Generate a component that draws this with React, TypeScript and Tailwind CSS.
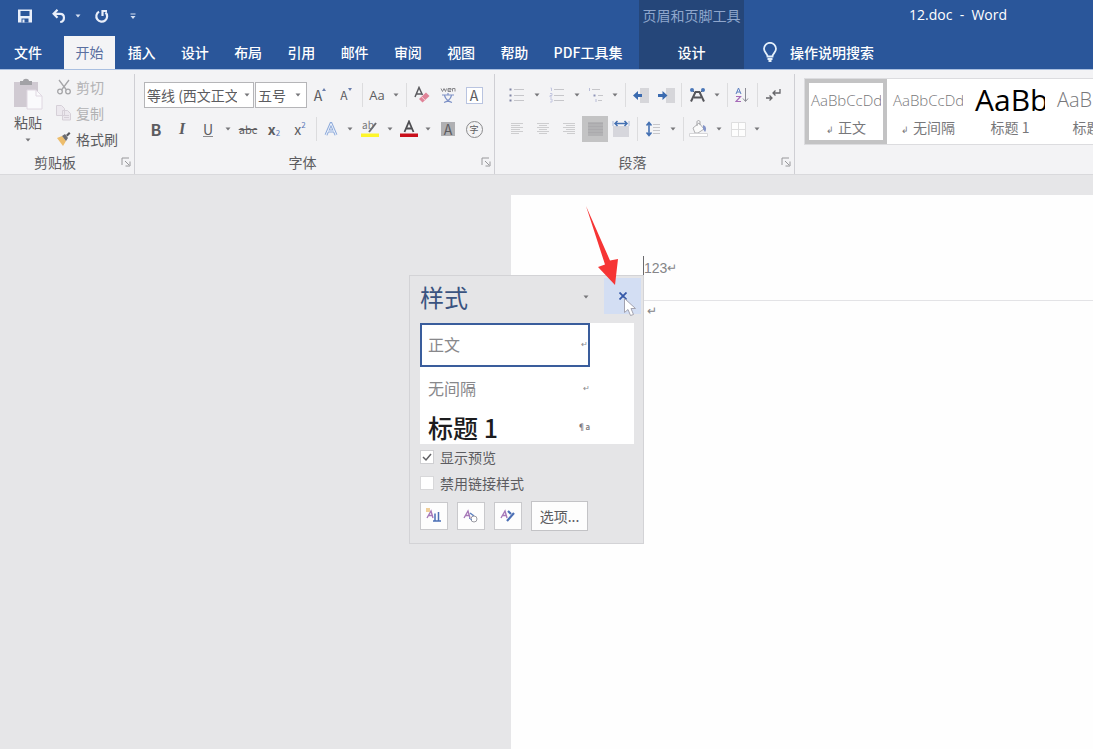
import type { ReactNode } from "react";
import clsx from "clsx";

const tabs = ["插入", "设计", "布局", "引用", "邮件", "审阅", "视图", "帮助"];

const gallery = [
  { name: "正文", mark: true, sample: "AaBbCcDd" },
  { name: "无间隔", mark: true, sample: "AaBbCcDd" },
  { name: "标题 1", sample: "AaBb", big: true },
  { name: "标题 2", sample: "AaBbC", medium: true },
];

function Triangle({ color = "#77777a", className }: { color?: string; className?: string }) {
  return (
    <svg width="6" height="4" viewBox="0 0 6 4" className={className}>
      <path d="M0.5 0.5h5L3 3.5z" fill={color} />
    </svg>
  );
}

function Caret({ className = "w-[14px]" }: { className?: string }) {
  return (
    <button aria-label="更多" className={clsx("flex h-[26px] shrink-0 items-center justify-center", className)}>
      <Triangle />
    </button>
  );
}

function Sep() {
  return (
    <div className="flex w-[6px] shrink-0 justify-center">
      <div className="h-6 w-px bg-[#dcdcde]" />
    </div>
  );
}

type ToolProps = { label: string; narrow?: boolean; active?: boolean; children: ReactNode };

function Tool({ label, narrow, active, children }: ToolProps) {
  return (
    <button
      title={label}
      aria-label={label}
      className={clsx(
        "flex h-[26px] shrink-0 items-center justify-center leading-none",
        narrow ? "w-6" : "w-[26px]",
        active && "bg-[#c3c3c4]",
      )}
    >
      {children}
    </button>
  );
}

function Launcher() {
  return (
    <button aria-label="对话框启动器" className="flex size-4 items-center justify-center">
      <svg width="10" height="10" viewBox="0 0 10 10" fill="none" stroke="#98989b">
        <path d="M1 8V1h7M4 4l4 4M9 4.5V9H4.5" />
      </svg>
    </button>
  );
}

function Group({ title, className, children }: { title: string; className: string; children: ReactNode }) {
  return (
    <section className={clsx("flex shrink-0 flex-col border-r border-[#cfcfd4]", className)}>
      <div className="h-20">{children}</div>
      <div className="flex h-5 items-center pb-1">
        <h2 className="min-w-0 flex-1 pr-2 text-center text-sm leading-5">{title}</h2>
        <Launcher />
      </div>
    </section>
  );
}

// horizontal rules used by the list and alignment icons: [x, y, width]
function Lines({ rows, color = "#c6c6ca" }: { rows: number[][]; color?: string }) {
  return (
    <>
      {rows.map(([x, y, w]) => (
        <path key={y} d={`M${x} ${y}h${w}`} stroke={color} />
      ))}
    </>
  );
}

function Header() {
  return (
    <header className="flex h-[70px] border-b border-[#a9bfe0] bg-[#2a569a] text-sm text-white">
      <div className="flex w-[639px] shrink-0 flex-col">
        <div className="flex h-9 items-center pb-1 pl-3">
          <button aria-label="保存" className="flex w-[26px] justify-center">
            <svg width="14" height="14" viewBox="0 0 14 14">
              <path d="M0 0.500h14v13H0z" fill="#e9effa" />
              <path d="M2.500 2h9v5h-9zM3.500 9.500h7v4h-7z" fill="#2a569a" />
              <path d="M4.500 10.500h2v3h-2z" fill="#e9effa" />
            </svg>
          </button>
          <button aria-label="撤消" className="ml-2 flex w-[26px] justify-center">
            <svg width="14" height="14" viewBox="0 0 14 14" fill="none" stroke="#e9effa" strokeWidth="2.2">
              <path d="M5.5 0.8L1.6 4.8l3.9 4M2 4.8h6.2c5 0 5 7.500 0 8.200" />
            </svg>
          </button>
          <span className="flex w-3 justify-center">
            <Triangle color="#d5e0f2" />
          </span>
          <button aria-label="重复" className="ml-1 flex w-[26px] justify-center">
            <svg width="15" height="15" viewBox="0 0 15 15" fill="none" stroke="#e9effa" strokeWidth="2.2">
              <path d="M5 2.600a5.400 5.400 0 1 0 6.500 .8" />
              <path d="M8.500 7V2H13" />
            </svg>
          </button>
          <button aria-label="自定义快速访问工具栏" className="ml-2 flex w-[22px] justify-center">
            <svg width="6" height="7" viewBox="0 0 6 7">
              <path d="M0.5 0.5h5v1h-5zM0.5 3h5L3 6z" fill="#d5e0f2" />
            </svg>
          </button>
        </div>
        <nav className="flex flex-1 font-medium">
          <button className="w-14 pb-[2px]">文件</button>
          <button className="ml-2 w-[51px] bg-[#f4f4f6] pb-[2px] font-normal text-[#5a6fa0]">开始</button>
          {tabs.map((tab) => (
            <button key={tab} className="flex-1 pb-[2px]">
              {tab}
            </button>
          ))}
          <button className="w-[98px] pr-1 pb-[2px]">PDF工具集</button>
        </nav>
      </div>
      <div className="flex w-[105px] shrink-0 flex-col bg-[#254679]">
        <div className="h-9 text-center leading-[30px] whitespace-nowrap text-[#8fa6cc]">页眉和页脚工具</div>
        <button className="flex-1 pb-[2px] font-medium">设计</button>
      </div>
      <div className="flex min-w-0 flex-1 flex-col">
        <h1 className="h-9 pl-[165px] font-['Open_Sans','Noto_Sans_CJK_SC',sans-serif] text-sm leading-[30px] font-medium whitespace-pre">
          {"12.doc  -  Word"}
        </h1>
        <button className="flex flex-1 items-center gap-3 pb-[2px] pl-[18px] font-medium">
          <svg width="16" height="20" viewBox="0 0 16 20" fill="none" stroke="#e4f0fb" strokeWidth="1.8">
            <path d="M5.5 14.500c0-3-3.500-4-3.500-7.700a6 6 0 0 1 12 0c0 3.700-3.500 4.700-3.500 7.700z" />
            <path d="M5.500 17h5M6.500 19h3" />
          </svg>
          操作说明搜索
        </button>
      </div>
    </header>
  );
}

function Clipboard() {
  return (
    <Group title="剪贴板" className="w-[135px]">
      <div className="flex h-full">
        <button className="flex w-14 flex-col items-center pt-1 text-sm leading-5">
          <svg width="32" height="32" viewBox="0 0 32 32">
            <path d="M2 4h24v25H2z" fill="#d0cad2" />
            <path d="M8 3h3c0-3 6-3 6 0h3v4H8z" fill="#a2a2a6" />
            <path d="M15 12h9l6 6v13H15z" fill="#fafafc" stroke="#e0d8e2" />
            <path d="M24 12v6h6" fill="none" stroke="#e0d8e2" />
          </svg>
          <span className="mt-[2px]">粘贴</span>
          <Triangle className="mt-[6px]" />
        </button>
        <div className="flex flex-col text-sm">
          <button className="flex h-[26px] items-center gap-1 text-[#b2b2b4]">
            <svg width="16" height="16" viewBox="0 0 16 16" fill="none" stroke="#a5a5a8" strokeWidth="1.3">
              <path d="M3 1l7.500 10M13 1L5.500 11" />
              <circle cx="4" cy="12.5" r="2.3" />
              <circle cx="12" cy="12.5" r="2.3" />
            </svg>
            剪切
          </button>
          <button className="flex h-[26px] items-center gap-1 text-[#b2b2b4]">
            <svg width="16" height="16" viewBox="0 0 16 16" fill="#ece8ee" stroke="#d6d0d8">
              <path d="M0.500 0.500h5l3 3v7h-8zM6.500 5.500h5l3 3v6.500h-8z" />
              <path d="M8 10.500h5M8 12.500h5" />
            </svg>
            复制
          </button>
          <button className="flex h-[26px] items-center gap-1">
            <svg width="16" height="16" viewBox="0 0 16 16">
              <path d="M1 7l5-2 4 5-3 5z" fill="#edbd6c" />
              <path d="M6 5l3-2 3 4-2 3z" fill="#6b6b70" />
              <path d="M10 4l3-3 1.500 1.500-3 3z" fill="#57575c" />
            </svg>
            格式刷
          </button>
        </div>
      </div>
    </Group>
  );
}

function FontGroup() {
  return (
    <Group title="字体" className="w-[360px]">
      <div className="flex h-[42px] items-center pl-[9px]">
        <div className="relative">
          <select
            aria-label="字体"
            className="block h-[26px] w-[110px] appearance-none border border-[#b5b5b8] bg-white pr-4 pl-[2px] text-sm"
          >
            <option>等线 (西文正文)</option>
          </select>
          <Triangle className="pointer-events-none absolute top-[11px] right-1" />
        </div>
        <div className="relative ml-px">
          <select
            aria-label="字号"
            className="block h-[26px] w-[52px] appearance-none border border-[#b5b5b8] bg-white pl-[2px] text-sm"
          >
            <option>五号</option>
          </select>
          <Triangle className="pointer-events-none absolute top-[11px] right-[6px]" />
        </div>
        <Tool label="增大字号">
          <span className="text-sm leading-none">A</span>
          <svg width="4" height="3" viewBox="0 0 4 3" className="mb-3">
            <path d="M0 3l2-3 2 3z" fill="#6b7fae" />
          </svg>
        </Tool>
        <Tool label="减小字号">
          <span className="text-xs leading-none">A</span>
          <svg width="4" height="3" viewBox="0 0 4 3" className="mb-3">
            <path d="M0 0l2 3 2-3z" fill="#6b7fae" />
          </svg>
        </Tool>
        <Sep />
        <Tool label="更改大小写" narrow>
          <span className="font-['Open_Sans',sans-serif] text-[13px]">Aa</span>
        </Tool>
        <Caret />
        <Sep />
        <Tool label="清除所有格式">
          <svg width="16" height="18" viewBox="0 0 16 18">
            <path d="M1 11L5 1.500 8.500 9M2.500 8h5" fill="none" stroke="#5a5a5e" strokeWidth="1.5" />
            <path d="M5 13l7-6.500 3.500 3.500-7 6.500z" fill="#e08398" />
            <path d="M7.500 10.700l3.500 3.500" stroke="#f6d5dc" />
          </svg>
        </Tool>
        <Tool label="拼音指南">
          <svg width="16" height="18" viewBox="0 0 16 18" fill="none">
            <path d="M1 2.500l1.500 3 1.500-3 1.500 3 1-3M8 4h3V2.500H8v3h3M12.500 5.500v-3h2.500v3" stroke="#8a8a8e" />
            <path d="M2 9h12M8 7v2M4.500 9.500c1 3.500 4 6 7.500 7M11.500 9.500c-1 3.500-4 6-7.500 7" stroke="#7c90c6" strokeWidth="1.2" />
          </svg>
        </Tool>
        <Tool label="字符边框">
          <span className="flex size-[17px] items-center justify-center border border-[#b9c4e0] bg-white text-sm leading-none">A</span>
        </Tool>
      </div>
      <div className="flex h-[26px] items-center pl-2">
        <Tool label="加粗">
          <b className="text-base leading-none">B</b>
        </Tool>
        <Tool label="倾斜">
          <i className="font-['Liberation_Serif',serif] text-base leading-none font-bold">I</i>
        </Tool>
        <Tool label="下划线">
          <span className="border-b border-[#8a8a8c] text-sm leading-none">U</span>
        </Tool>
        <Caret />
        <Tool label="删除线">
          <s className="text-[11px]">abc</s>
        </Tool>
        <Tool label="下标">
          <b className="text-sm leading-none">x</b>
          <span className="mt-2 text-[8px] text-[#5c78b8]">2</span>
        </Tool>
        <Tool label="上标">
          <span className="text-sm leading-none">x</span>
          <span className="mb-2 text-[8px] text-[#5c78b8]">2</span>
        </Tool>
        <Sep />
        <Tool label="文本效果" narrow>
          <svg width="14" height="14" viewBox="0 0 14 14" fill="none">
            <path d="M2 13L7 1.500 12 13M4 9h6" stroke="#8fabdb" strokeWidth="3" />
            <path d="M2 13L7 1.500 12 13M4 9h6" stroke="#f0f5fd" />
          </svg>
        </Tool>
        <Caret />
        <Tool label="突出显示颜色">
          <svg width="18" height="18" viewBox="0 0 18 18">
            <text x="1" y="9" fontSize="10" fill="#77777a">
              ab
            </text>
            <path d="M8 12l7-9" stroke="#6a6a70" strokeWidth="2" />
            <path d="M0 13.500h18v3.500H0z" fill="#fdf52a" />
          </svg>
        </Tool>
        <Caret />
        <Tool label="字体颜色" narrow>
          <svg width="18" height="18" viewBox="0 0 18 18">
            <path d="M4.500 12L9 1.500 13.500 12M6 8.500h6" fill="none" stroke="#4e4e52" strokeWidth="1.8" />
            <path d="M0 13.500h18v3.500H0z" fill="#c9101c" />
          </svg>
        </Tool>
        <Caret />
        <Tool label="字符底纹">
          <span className="flex size-[14px] items-center justify-center bg-[#b0b0b3] text-sm leading-none">A</span>
        </Tool>
        <Tool label="带圈字符">
          <span className="flex size-[17px] items-center justify-center rounded-full border border-[#8a8a8c] text-[9px]">字</span>
        </Tool>
      </div>
    </Group>
  );
}

function Paragraph() {
  return (
    <Group title="段落" className="w-[300px]">
      <div className="flex h-[42px] items-center pl-[9px]">
        <Tool label="项目符号">
          <svg width="16" height="16" viewBox="0 0 16 16">
            <Lines rows={[[5, 2.5, 10], [5, 8.5, 10], [5, 13.5, 10]]} />
            <path d="M0.500 1.500h2v2h-2zM0.500 7.500h2v2h-2zM0.500 12.500h2v2h-2z" fill="#8085a5" />
          </svg>
        </Tool>
        <Caret />
        <Tool label="编号">
          <svg width="16" height="16" viewBox="0 0 16 16">
            <Lines rows={[[5, 2.5, 10], [5, 8.5, 10], [5, 13.5, 10]]} />
            <path d="M1.500 1h1v3M1 6.500h2v2H1v1.500h2M1 12h2v3H1" fill="none" stroke="#c3c6e0" />
          </svg>
        </Tool>
        <Caret />
        <Tool label="多级列表" narrow>
          <svg width="16" height="16" viewBox="0 0 16 16">
            <Lines rows={[[4, 2.5, 8], [10, 8.5, 5], [10, 13.5, 4]]} />
            <path d="M1.500 1v3M8 12v3" stroke="#b9bdd8" />
            <path d="M5.500 7.500h2v2h-2z" fill="#8f94b8" />
          </svg>
        </Tool>
        <Caret />
        <Sep />
        <Tool label="减少缩进量">
          <svg width="17" height="15" viewBox="0 0 17 15">
            <path d="M7 0h9v15H7z" fill="#d6d6da" />
            <path d="M0 7.500L5 3v3h4v3H5v3z" fill="#3b6bb0" />
          </svg>
        </Tool>
        <Tool label="增加缩进量" narrow>
          <svg width="17" height="15" viewBox="0 0 17 15">
            <path d="M8 0h9v15H8z" fill="#d6d6da" />
            <path d="M9.500 7.500L4.500 3v3H0v3h4.500v3z" fill="#3b6bb0" />
          </svg>
        </Tool>
        <Sep />
        <Tool label="中文版式">
          <svg width="17" height="16" viewBox="0 0 17 16">
            <path d="M2 14.500L6.500 5h4L15 14.500M5 10.500h7" fill="none" stroke="#55555a" strokeWidth="2" />
            <path d="M3 3l3 3M14 3l-3 3" stroke="#55555a" />
            <circle cx="3" cy="3" r="2" fill="#4a76b8" />
            <circle cx="14" cy="3" r="2" fill="#4a76b8" />
          </svg>
        </Tool>
        <Caret />
        <Sep />
        <Tool label="排序" narrow>
          <svg width="14" height="16" viewBox="0 0 14 16" fill="none">
            <path d="M1 7l2.500-6L6 7M2 5h3" stroke="#5b7fc0" />
            <path d="M1 9.500h4.500L1 14.500h5" stroke="#a66bb8" strokeWidth="1.2" />
            <path d="M10.500 1v13M8 11.500l2.500 3 2.500-3" stroke="#8c8c96" />
          </svg>
        </Tool>
        <Sep />
        <Tool label="显示编辑标记">
          <svg width="16" height="16" viewBox="0 0 16 16" fill="none" stroke="#66666a" strokeWidth="1.3">
            <path d="M15 2v4H8M10.500 3.500L8 6l2.500 2.500M1 11h6M4.500 8.500L7 11l-2.500 2.500" />
          </svg>
        </Tool>
      </div>
      <div className="flex h-[26px] items-center pl-[9px]">
        <Tool label="左对齐">
          <svg width="14" height="14" viewBox="0 0 14 14">
            <Lines rows={[[1, 1.5, 12], [1, 3.5, 9], [1, 5.5, 12], [1, 7.5, 9], [1, 9.5, 12], [1, 11.5, 8]]} color="#cdcdcf" />
          </svg>
        </Tool>
        <Tool label="居中">
          <svg width="14" height="14" viewBox="0 0 14 14">
            <Lines rows={[[1, 1.5, 12], [3, 3.5, 8], [1, 5.5, 12], [3, 7.5, 8], [1, 9.5, 12], [3, 11.5, 8]]} color="#cdcdcf" />
          </svg>
        </Tool>
        <Tool label="右对齐">
          <svg width="14" height="14" viewBox="0 0 14 14">
            <Lines rows={[[1, 1.5, 12], [4, 3.5, 9], [1, 5.5, 12], [4, 7.5, 9], [1, 9.5, 12], [5, 11.5, 8]]} color="#cdcdcf" />
          </svg>
        </Tool>
        <Tool label="两端对齐" active>
          <svg width="15" height="14" viewBox="0 0 15 14">
            <path d="M0 0h15v14H0z" fill="#b2b2b4" />
            <Lines rows={[[0, 1.5, 15], [0, 4.5, 15], [0, 7.5, 15], [0, 10.5, 15]]} color="#abaaad" />
          </svg>
        </Tool>
        <Tool label="分散对齐">
          <svg width="18" height="18" viewBox="0 0 18 18">
            <path d="M1 6h16v11H1z" fill="#d6d6dc" />
            <path d="M1 1v5M17 1v5" stroke="#a9b8d8" />
            <path d="M3 3.500h12M5.500 1L3 3.500 5.500 6M12.500 1L15 3.500 12.500 6" fill="none" stroke="#4470b2" strokeWidth="1.5" />
          </svg>
        </Tool>
        <Sep />
        <Tool label="行距">
          <svg width="16" height="16" viewBox="0 0 16 16">
            <path d="M4 2v12M1.500 4.500L4 1.500l2.500 3M1.500 11.500L4 14.500l2.500-3" fill="none" stroke="#4470b2" strokeWidth="1.6" />
            <Lines rows={[[8, 3.5, 7], [8, 6.5, 7], [8, 9.5, 7], [8, 12.5, 7]]} />
          </svg>
        </Tool>
        <Caret />
        <Sep />
        <Tool label="底纹">
          <svg width="20" height="18" viewBox="0 0 20 18">
            <path d="M4 8l6-5 5 6-6 4H6z" fill="#fafafa" stroke="#b0b0b3" />
            <path d="M8 6V2c0-2 3-2 3 0v3" fill="none" stroke="#a5a5a8" />
            <path d="M14 5c3 1 4 4 2 7l-2-3z" fill="#8494c8" />
            <path d="M0.500 13.500h18v3h-18z" fill="#fff" stroke="#d6d6d9" />
          </svg>
        </Tool>
        <Caret />
        <Tool label="边框" narrow>
          <svg width="15" height="15" viewBox="0 0 15 15">
            <path d="M0.500 0.500h14v14h-14zM7.500 0.500v14M0.500 7.500h14" fill="#fdfdfd" stroke="#dededf" />
          </svg>
        </Tool>
        <Caret />
      </div>
    </Group>
  );
}

function Gallery() {
  return (
    <div className="mt-1 ml-[9px] flex min-w-0 flex-1 self-start overflow-hidden border border-r-0 border-[#dcdcdf] bg-white">
      {gallery.map(({ name, mark, sample, big, medium }, i) => (
        <button
          key={name}
          className={clsx(
            "flex w-[82px] shrink-0 flex-col border-4 text-[#77777a]",
            i === 0 ? "border-[#c3c3c4]" : "border-transparent",
          )}
        >
          <span
            className={clsx(
              "flex h-[34px] w-[72px] items-center overflow-hidden pl-[2px] font-['Open_Sans',sans-serif] leading-none whitespace-nowrap",
              big && "text-[30px] text-black",
              medium && "text-xl font-light",
              !big && !medium && "text-[15px] font-light",
            )}
          >
            {sample}
          </span>
          <span className="w-full text-center text-sm leading-5 whitespace-nowrap">
            {mark && <span className="mr-1 text-[9px]">↲</span>}
            {name}
          </span>
        </button>
      ))}
    </div>
  );
}

function StyleButton({ label, children }: { label: string; children?: ReactNode }) {
  return (
    <button aria-label={label} className="flex size-7 items-center justify-center border border-[#c9c9cc] bg-[#fdfdfd]">
      <svg width="16" height="16" viewBox="0 0 16 16" fill="none">
        <path d="M1 10l4-7 2 7M2.500 7.500H6" stroke="#a678b8" strokeWidth="1.4" />
        {children}
      </svg>
    </button>
  );
}

function StylesPane() {
  return (
    <aside className="absolute top-[100px] left-[409px] w-[235px] border border-[#d3d3d6] bg-[#e5e5e7] pb-3 pl-[10px]">
      <div className="flex h-[47px] items-start">
        <h2 className="flex-1 text-2xl leading-[42px] text-[#3a5380]">样式</h2>
        <Caret className="mt-2 w-6" />
        <button aria-label="关闭" className="mt-[2px] mr-[2px] ml-[6px] flex h-9 w-[37px] items-center justify-center bg-[#d3def3]">
          <svg width="8" height="8" viewBox="0 0 8 8" stroke="#3558a8" strokeWidth="1.8">
            <path d="M0.500 0.500l7 7M7.500 0.500l-7 7" />
          </svg>
        </button>
      </div>
      <ul className="mr-[9px] h-[121px] overflow-hidden bg-white text-base text-[#88888b]">
        <li className="flex h-11 w-[170px] items-center justify-between border-2 border-[#3a5d9c] pb-[2px] pl-[6px]">
          正文<span className="text-[8px]">↵</span>
        </li>
        <li className="flex h-[43px] w-[170px] items-center justify-between pb-[2px] pl-2">
          无间隔<span className="text-[8px]">↵</span>
        </li>
        <li className="flex h-[34px] w-[170px] items-center justify-between pl-2 text-[25px] leading-none font-medium text-[#1c1c1e]">
          标题 1<span className="text-[8px] text-[#77777a]">¶a</span>
        </li>
      </ul>
      <label className="flex h-[26px] items-center gap-[6px] text-sm">
        <span className="relative flex">
          <input type="checkbox" defaultChecked className="size-[14px] appearance-none border border-[#cfcfd2] bg-white" />
          <svg width="14" height="14" viewBox="0 0 14 14" className="pointer-events-none absolute" fill="none">
            <path d="M3 7l3 3 5-6" stroke="#606064" strokeWidth="1.5" />
          </svg>
        </span>
        显示预览
      </label>
      <label className="flex h-[26px] items-center gap-[6px] text-sm">
        <input type="checkbox" className="size-[14px] appearance-none border border-[#d8d8da] bg-white" />
        禁用链接样式
      </label>
      <div className="mt-[5px] flex items-center gap-[9px]">
        <StyleButton label="新建样式">
          <path d="M9 5.500v7M12.500 4v8.500M7 13h8" stroke="#4b6fb5" strokeWidth="1.5" />
          <path d="M0 0h4v4H0z" fill="#f0cf9a" />
        </StyleButton>
        <StyleButton label="样式检查器">
          <path d="M7 5l4 3" stroke="#5b7fc0" strokeWidth="1.5" />
          <circle cx="11" cy="11" r="3" stroke="#9a9aa2" fill="#fff" />
          <path d="M6 10l3 2" stroke="#5b7fc0" />
        </StyleButton>
        <StyleButton label="管理样式">
          <path d="M8 3l3 3M7 13l7-8" stroke="#4b6fb5" strokeWidth="2.2" />
        </StyleButton>
        <button className="h-[30px] w-[57px] border border-[#c3c3c6] bg-[#fdfdfd] text-sm">选项...</button>
      </div>
    </aside>
  );
}

export default function App() {
  return (
    <div className="flex min-h-screen flex-col overflow-hidden bg-[#e6e6e8] font-['Noto_Sans_CJK_SC',sans-serif] text-[#5c5c60]">
      <Header />
      <div className="flex border-b border-[#d9d9dc] bg-[#f3f3f5] pt-1">
        <Clipboard />
        <FontGroup />
        <Paragraph />
        <Gallery />
      </div>
      <main className="relative flex flex-1 flex-col pt-5">
        <article className="ml-[511px] flex-1 bg-[#fefefe] pt-[61px] pl-[132px] font-['Liberation_Sans','Noto_Sans_CJK_SC',sans-serif] text-sm text-[#858588]">
          <header className="h-[45px] border-b border-[#e3e3e6]">
            <p className="inline-flex items-center border-l border-[#6a6a6d] leading-6">
              123<span className="text-xs">↵</span>
            </p>
          </header>
          <p className="pl-1 text-xs leading-5">↵</p>
        </article>
        <StylesPane />
        <svg width="36" height="82" viewBox="0 0 36 82" className="pointer-events-none absolute top-[30px] left-[584px]">
          <path d="M2 1l24 54.500 8-1.500-3 26L14 62l7-2.500z" fill="#f63535" />
        </svg>
        <svg width="15" height="21" viewBox="0 0 15 21" className="pointer-events-none absolute top-[122px] left-[623px]">
          <path d="M1.500 1.500v14l3.500-3 2.500 6 3-1-2.500-6h4.500z" fill="#fff" stroke="#a3a3b0" />
        </svg>
      </main>
    </div>
  );
}
